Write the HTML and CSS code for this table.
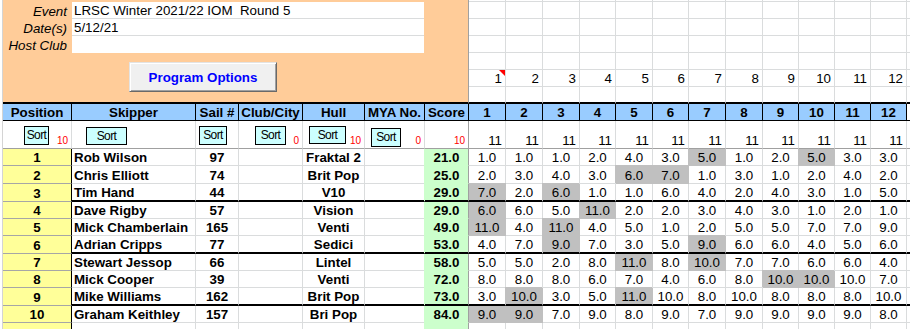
FILE: index.html
```html
<!DOCTYPE html>
<html lang="en">
<head>
<meta charset="utf-8">
<title>LRSC Winter 2021/22 IOM Round 5</title>
<link rel="stylesheet" href="styles.css">
</head>
<body>
<div class="sheet">
  <div class="panel">
    <div class="lbl">Event</div><div class="inp">LRSC Winter 2021/22 IOM  Round 5</div>
    <div class="lbl">Date(s)</div><div class="inp">5/12/21</div>
    <div class="lbl">Host Club</div><div class="inp last"></div>
    <button class="prog">Program Options</button>
  </div>

  <div class="row"><div></div><div></div><div></div><div></div><div></div><div></div><div></div><div></div><div></div><div></div><div></div><div></div><div></div></div>
  <div class="row"><div></div><div></div><div></div><div></div><div></div><div></div><div></div><div></div><div></div><div></div><div></div><div></div><div></div></div>
  <div class="row"><div></div><div></div><div></div><div></div><div></div><div></div><div></div><div></div><div></div><div></div><div></div><div></div><div></div></div>
  <div class="row"><div></div><div></div><div></div><div></div><div></div><div></div><div></div><div></div><div></div><div></div><div></div><div></div><div></div></div>
  <div class="row"><div></div><div></div><div></div><div></div><div></div><div></div><div></div><div></div><div></div><div></div><div></div><div></div><div></div></div>
  <div class="row"><div class="rn note">1</div><div class="rn">2</div><div class="rn">3</div><div class="rn">4</div><div class="rn">5</div><div class="rn">6</div><div class="rn">7</div><div class="rn">8</div><div class="rn">9</div><div class="rn">10</div><div class="rn">11</div><div class="rn">12</div><div></div></div>
  <div class="row tk"><div></div><div></div><div></div><div></div><div></div><div></div><div></div><div></div><div></div><div></div><div></div><div></div><div></div></div>

  <div class="row hd">
    <div>Position</div><div>Skipper</div><div>Sail #</div><div>Club/City</div><div>Hull</div><div>MYA No.</div><div>Score</div>
    <div>1</div><div>2</div><div>3</div><div>4</div><div>5</div><div>6</div><div>7</div><div>8</div><div>9</div><div>10</div><div>11</div><div>12</div><div class="x"></div>
  </div>

  <div class="row srt">
    <div class="cnt"><button class="sort sp-pos">Sort</button>10</div>
    <div><button class="sort sp-skp">Sort</button></div>
    <div><button class="sort sp-sail">Sort</button></div>
    <div class="cnt"><button class="sort sp-club">Sort</button>0</div>
    <div class="cnt"><button class="sort sp-hull">Sort</button>10</div>
    <div class="cnt"><button class="sort sp-mya">Sort</button>0</div>
    <div class="cnt sc0">10</div>
    <div class="rn">11</div><div class="rn">11</div><div class="rn">11</div><div class="rn">11</div><div class="rn">11</div><div class="rn">11</div><div class="rn">11</div><div class="rn">11</div><div class="rn">11</div><div class="rn">11</div><div class="rn">11</div><div class="rn">11</div><div></div>
  </div>

  <div class="row">
    <div class="pos">1</div><div class="nm">Rob Wilson</div><div class="b">97</div><div></div><div class="b">Fraktal 2</div><div></div><div class="sc">21.0</div>
    <div>1.0</div><div>1.0</div><div>1.0</div><div>2.0</div><div>4.0</div><div>3.0</div><div class="g">5.0</div><div>1.0</div><div>2.0</div><div class="g">5.0</div><div>3.0</div><div>3.0</div><div></div>
  </div>
  <div class="row">
    <div class="pos">2</div><div class="nm">Chris Elliott</div><div class="b">74</div><div></div><div class="b">Brit Pop</div><div></div><div class="sc t">25.0</div>
    <div>2.0</div><div>3.0</div><div>4.0</div><div>3.0</div><div class="g t">6.0</div><div class="g t">7.0</div><div>1.0</div><div>3.0</div><div>1.0</div><div>2.0</div><div>4.0</div><div>2.0</div><div></div>
  </div>
  <div class="row tk">
    <div class="pos">3</div><div class="nm">Tim Hand</div><div class="b">44</div><div></div><div class="b">V10</div><div></div><div class="sc t">29.0</div>
    <div class="g n t">7.0</div><div>2.0</div><div class="g t">6.0</div><div>1.0</div><div>1.0</div><div>6.0</div><div>4.0</div><div>2.0</div><div>4.0</div><div>3.0</div><div>1.0</div><div>5.0</div><div></div>
  </div>
  <div class="row">
    <div class="pos">4</div><div class="nm">Dave Rigby</div><div class="b">57</div><div></div><div class="b">Vision</div><div></div><div class="sc">29.0</div>
    <div class="g n">6.0</div><div>6.0</div><div>5.0</div><div class="g">11.0</div><div>2.0</div><div>2.0</div><div>3.0</div><div>4.0</div><div>3.0</div><div>1.0</div><div>2.0</div><div>1.0</div><div></div>
  </div>
  <div class="row">
    <div class="pos">5</div><div class="nm">Mick Chamberlain</div><div class="b">165</div><div></div><div class="b">Venti</div><div></div><div class="sc t">49.0</div>
    <div class="g n t">11.0</div><div>4.0</div><div class="g t">11.0</div><div>4.0</div><div>5.0</div><div>1.0</div><div>2.0</div><div>5.0</div><div>5.0</div><div>7.0</div><div>7.0</div><div>9.0</div><div></div>
  </div>
  <div class="row tk">
    <div class="pos">6</div><div class="nm">Adrian Cripps</div><div class="b">77</div><div></div><div class="b">Sedici</div><div></div><div class="sc t">53.0</div>
    <div>4.0</div><div>7.0</div><div class="g t">9.0</div><div>7.0</div><div>3.0</div><div>5.0</div><div class="g t">9.0</div><div>6.0</div><div>6.0</div><div>4.0</div><div>5.0</div><div>6.0</div><div></div>
  </div>
  <div class="row">
    <div class="pos">7</div><div class="nm">Stewart Jessop</div><div class="b">66</div><div></div><div class="b">Lintel</div><div></div><div class="sc">58.0</div>
    <div>5.0</div><div>5.0</div><div>2.0</div><div>8.0</div><div class="g">11.0</div><div>8.0</div><div class="g">10.0</div><div>7.0</div><div>7.0</div><div>6.0</div><div>6.0</div><div>4.0</div><div></div>
  </div>
  <div class="row">
    <div class="pos">8</div><div class="nm">Mick Cooper</div><div class="b">39</div><div></div><div class="b">Venti</div><div></div><div class="sc t">72.0</div>
    <div>8.0</div><div>8.0</div><div>8.0</div><div>6.0</div><div>7.0</div><div>4.0</div><div>6.0</div><div>8.0</div><div class="g t">10.0</div><div class="g t">10.0</div><div>10.0</div><div>7.0</div><div></div>
  </div>
  <div class="row tk">
    <div class="pos">9</div><div class="nm">Mike Williams</div><div class="b">162</div><div></div><div class="b">Brit Pop</div><div></div><div class="sc t">73.0</div>
    <div>3.0</div><div class="g t">10.0</div><div>3.0</div><div>5.0</div><div class="g t">11.0</div><div>10.0</div><div>8.0</div><div>10.0</div><div>8.0</div><div>8.0</div><div>8.0</div><div>10.0</div><div></div>
  </div>
  <div class="row">
    <div class="pos">10</div><div class="nm">Graham Keithley</div><div class="b">157</div><div></div><div class="b">Bri Pop</div><div></div><div class="sc">84.0</div>
    <div class="g n">9.0</div><div class="g">9.0</div><div>7.0</div><div>9.0</div><div>8.0</div><div>9.0</div><div>7.0</div><div>9.0</div><div>9.0</div><div>9.0</div><div>9.0</div><div>8.0</div><div></div>
  </div>
  <div class="row">
    <div class="pos"></div><div></div><div></div><div></div><div></div><div></div><div class="sc t"></div>
    <div></div><div></div><div></div><div></div><div></div><div></div><div></div><div></div><div></div><div></div><div></div><div></div><div></div>
  </div>
</div>
</body>
</html>
```

FILE: styles.css
```css
* {
  box-sizing: border-box;
}

html,
body {
  margin: 0;
  padding: 0;
  background: #fff;
}

body {
  width: 910px;
  height: 329px;
  overflow: hidden;
  font-family: "Liberation Sans", Arial, sans-serif;
  font-size: 13.333px;
  color: #000;
}

.sheet {
  display: grid;
  margin-left: 2px;
  border-left: 1px solid #d4d4d4;
  grid-template-columns: 69px 124px 43px 64px 62px 60px 44px 37px 37px 37px 36px 37px 36px 37px 37px 36px 36px 36px 36px 40px;
  grid-template-rows: 2px 17px 17px 17px 17px 17px 17px 17px 28px 17px 18px 18px 17px 17px 18px 17px 17px 18px 17px 17px;
}

/* ---------- header panel ---------- */
.panel {
  grid-column: 1 / 8;
  grid-row: 1 / 8;
  background: #ffcc99;
  border-right: 1px solid #a0a0a0;
  border-bottom: 2px solid #000;
  padding-top: 2px;
  display: grid;
  grid-template-columns: 69px 352px;
  grid-template-rows: 17px 17px 17px auto;
  align-content: start;
}

.lbl {
  display: flex;
  align-items: flex-end;
  justify-content: flex-end;
  padding-right: 5px;
  font-style: italic;
  line-height: 13px;
  padding-bottom: 1px;
  white-space: nowrap;
}

.inp {
  display: flex;
  align-items: flex-end;
  background: #fff;
  border-bottom: 1px solid #dadcdd;
  padding-left: 2px;
  padding-bottom: 1px;
  line-height: 13px;
  white-space: pre;
}

.inp.last {
  border-bottom-color: transparent;
}

.prog {
  grid-column: 1 / 3;
  justify-self: start;
  margin: 9px 0 0 126px;
  width: 148px;
  height: 30px;
  padding: 0;
  font-family: "Liberation Sans", Arial, sans-serif;
  font-size: 13.333px;
  font-weight: bold;
  color: #0000ff;
  background: #f0f0f0;
  border: 1px solid;
  border-color: #e3e3e3 #696969 #696969 #e3e3e3;
  box-shadow: inset 1px 1px 0 #fff, inset -1px -1px 0 #a0a0a0;
}

/* ---------- cells ---------- */
.row {
  display: contents;
}

.row > div {
  display: flex;
  align-items: flex-end;
  justify-content: center;
  border-right: 1px solid #dadcdd;
  border-bottom: 1px solid #dadcdd;
  line-height: 13px;
  padding-bottom: 1px;
  white-space: nowrap;
  overflow: hidden;
  min-width: 0;
  position: relative;
}

.row > .rn {
  justify-content: flex-end;
  padding-right: 3px;
}

.note::after {
  content: "";
  position: absolute;
  top: 0;
  right: 0;
  border-style: solid;
  border-width: 0 6px 6px 0;
  border-color: transparent #ff0000 transparent transparent;
}

.row.tk > div {
  border-bottom: 2px solid #000;
}

/* column header */
.row.hd > div {
  background: #99ccff;
  font-weight: bold;
  border-right-color: #000;
  border-bottom-color: #000;
}

.row.hd > .x {
  background: #fff;
  border-right-color: #dadcdd;
}

/* sort row */
.row.srt > div {
  border-bottom-color: #a0a0a0;
}

.row.srt > .cnt {
  justify-content: flex-end;
  padding: 0 3px 2px 0;
  color: #ff0000;
  font-size: 10px;
  line-height: 10px;
}

.row.srt > .sc0 {
  border-right-color: #a0a0a0;
}

.sort {
  position: absolute;
  display: flex;
  align-items: center;
  justify-content: center;
  margin: 0;
  padding: 0 0 1px;
  background: #ccffff;
  border: 1px solid #000;
  font-family: "Liberation Sans", Arial, sans-serif;
  font-size: 12px;
  letter-spacing: -0.6px;
  line-height: 12px;
  color: #000;
}

.sp-pos { left: 21px; top: 5px; width: 25px; height: 19px; }
.sp-skp { left: 14px; top: 6px; width: 41px; height: 18px; }
.sp-sail { left: 3px; top: 5px; width: 28px; height: 19px; }
.sp-club { left: 16px; top: 5px; width: 31px; height: 19px; }
.sp-hull { left: 6px; top: 5px; width: 37px; height: 18px; }
.sp-mya { left: 6px; top: 7px; width: 30px; height: 19px; }

/* data */
.row > .pos {
  background: #ffff99;
  font-weight: bold;
  border-right: 1px solid #000;
  border-bottom: 1px solid #a6a6a6;
}

.row.tk > .pos {
  border-bottom: 1px solid #a6a6a6;
}

.row > .nm {
  justify-content: flex-start;
  padding-left: 2px;
  font-weight: bold;
}

.row > .b {
  font-weight: bold;
}

.row > .sc {
  background: #ccffcc;
  font-weight: bold;
  border-bottom-color: #ccffcc;
  border-right-color: #a0a0a0;
  box-shadow: -1px 0 0 #ccffcc;
}

.row > .sc.t {
  box-shadow: -1px -1px 0 #ccffcc;
}

.row > .g {
  background: #c0c0c0;
  border-right-color: #c0c0c0;
  border-bottom-color: #c0c0c0;
  box-shadow: -1px 0 0 #c0c0c0;
}

.row > .g.t {
  box-shadow: -1px -1px 0 #c0c0c0;
}

.row > .g.n {
  box-shadow: none;
}

.row > .g.n.t {
  box-shadow: 0 -1px 0 #c0c0c0;
}
```
